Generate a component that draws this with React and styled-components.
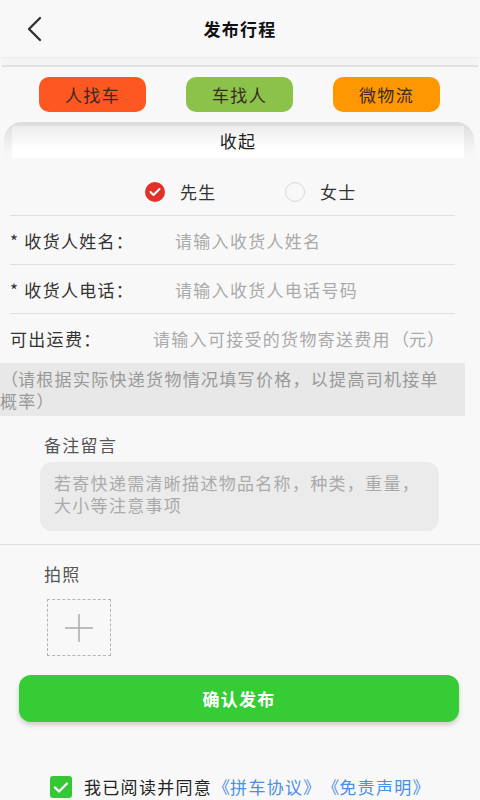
import styled, { createGlobalStyle } from 'styled-components';

const GlobalStyle = createGlobalStyle`
  html, body {
    margin: 0;
    padding: 0;
    background: #f8f8f8;
    font-family: "Noto Sans CJK SC", "Noto Sans", sans-serif;
  }
  * { box-sizing: border-box; }
`

const Page = styled.div`
  width: 480px;
  height: 800px;
  overflow: hidden;
  background: #f8f8f8;
  color: #333;
  font-size: 17px;
  letter-spacing: 1.3px;
`

const Header = styled.header`
  height: 58px;
  display: flex;
  align-items: center;
  justify-content: center;
  position: relative;
  border-bottom: 1px solid #ececec;
`

const BackButton = styled.button`
  position: absolute;
  left: 20px;
  top: 14px;
  border: 0;
  background: none;
  padding: 0;
  width: 28px;
  height: 30px;
  display: flex;
  align-items: center;
  justify-content: center;
`

const Title = styled.h1`
  margin: 0;
  font-size: 17px;
  font-weight: 700;
  color: #111;
`

const Strip = styled.div`
  height: 9px;
  margin: 0 2px;
  background: #f4f4f4;
  border-bottom: 2px solid #e2e2e2;
`

const TypeRow = styled.div`
  display: flex;
  justify-content: space-between;
  padding: 10px 40px 0 39px;
`

const TypeButton = styled.button`
  width: 107px;
  height: 35px;
  border: 0;
  border-radius: 10px;
  background: ${p => p.$bg};
  color: #3a2a20;
  font-family: inherit;
  font-size: 17px;
  letter-spacing: 1.3px;
  padding: 0;
`

const Collapse = styled.div`
  margin: 10px 6px 0 4px;
  height: 36px;
  border-radius: 18px 18px 0 0;
  background: linear-gradient(#dcdcdc, #f6f6f6 80%);
  padding: 0 10px 0 8px;
  display: flex;
`

const CollapseInner = styled.div`
  flex: 1;
  margin-top: 4px;
  padding-bottom: 3px;
  background: linear-gradient(#ececec, #fff 70%);
  display: flex;
  align-items: center;
  justify-content: center;
  color: #222;
`

const Form = styled.div`
  padding: 0 25px 0 10px;
`

const GenderRow = styled.div`
  height: 58px;
  padding-top: 10px;
  display: flex;
  align-items: center;
  padding-left: 135px;
  border-bottom: 1px solid #e0e0e0;
`

const Option = styled.label`
  display: flex;
  align-items: center;
  gap: 15px;
  color: #333;
  width: 140px;
`

const Radio = styled.span`
  width: 20px;
  height: 20px;
  border-radius: 50%;
  display: flex;
  align-items: center;
  justify-content: center;
  background: ${p => (p.$on ? '#e03228' : 'transparent')};
  border: ${p => (p.$on ? '0' : '1px solid #d8d8d8')};
`

const FieldRow = styled.div`
  height: 49px;
  display: flex;
  align-items: center;
  border-bottom: ${p => (p.$last ? '0' : '1px solid #e0e0e0')};
`

const Label = styled.span`
  width: ${p => p.$w}px;
  color: #333;
  flex-shrink: 0;
  white-space: nowrap;
`

const Placeholder = styled.span`
  color: #aaa;
  white-space: nowrap;
`

/* full-width cell for a bracket, glyph pushed to the inner side */
const Bracket = styled.span`
  display: inline-block;
  width: 18px;
  letter-spacing: 0;
  white-space: nowrap;
  text-align: ${p => (p.$open ? 'right' : 'left')};
`

const Note = styled.div`
  margin: 0 15px 0 0;
  padding: 5px 10px 5px 0;
  height: 53px;
  background: #e8e8e8;
  color: #999;
  line-height: 22px;
`

const Section = styled.div`
  padding: 16px 41px ${p => p.$bottom}px 40px;
`

const SectionTitle = styled.div`
  color: #555;
  padding-left: 4px;
  margin-bottom: 5px;
`

const Remark = styled.div`
  height: 69px;
  border-radius: 12px;
  background: #ebebeb;
  color: #aaa;
  line-height: 22px;
  padding: 10px 12px 10px 14px;
`

const Divider = styled.div`
  height: 1px;
  background: #dedede;
`

const PhotoBox = styled.div`
  width: 64px;
  height: 57px;
  margin-left: 7px;
  margin-top: 13px;
  border: 1px dashed #b5b5b5;
  display: flex;
  align-items: center;
  justify-content: center;
`

const Submit = styled.button`
  display: block;
  width: 440px;
  height: 47px;
  margin-left: 19px;
  border: 0;
  border-radius: 12px;
  background: #35cc35;
  color: #fff;
  font-family: inherit;
  font-size: 17px;
  letter-spacing: 1.3px;
  font-weight: 700;
  box-shadow: 0 3px 5px rgba(0, 0, 0, 0.18);
`

const Agree = styled.div`
  margin-top: 54px;
  padding-left: 50px;
  display: flex;
  align-items: center;
  gap: 12px;
  color: #222;
  white-space: nowrap;
  line-height: 22px;
`

const CheckBox = styled.span`
  width: 22px;
  height: 22px;
  flex-shrink: 0;
  border-radius: 3px;
  background: #35c735;
  display: flex;
  align-items: center;
  justify-content: center;
`

const Link = styled.span`
  color: #4a8fe0;
`

const types = [
  { text: '人找车', bg: '#ff5722' },
  { text: '车找人', bg: '#8bc34a' },
  { text: '微物流', bg: '#ff9800' },
]

export default function App() {
  return (
    <Page lang="zh-CN">
      <GlobalStyle />
      <Header>
        <BackButton>
          <svg width="16" height="26" viewBox="0 0 16 26">
            <path d="M14 2 L3 13 L14 24" fill="none" stroke="#333" strokeWidth="2.4" strokeLinecap="round" strokeLinejoin="round" />
          </svg>
        </BackButton>
        <Title>发布行程</Title>
      </Header>
      <Strip />
      <TypeRow>
        {types.map(t => (
          <TypeButton key={t.text} $bg={t.bg}>{t.text}</TypeButton>
        ))}
      </TypeRow>
      <Collapse>
        <CollapseInner>收起</CollapseInner>
      </Collapse>
      <Form>
        <GenderRow>
          <Option>
            <Radio $on>
              <svg width="12" height="10" viewBox="0 0 12 10">
                <path d="M1.5 5 L4.5 8 L10.5 2" fill="none" stroke="#fff" strokeWidth="2" strokeLinecap="round" strokeLinejoin="round" />
              </svg>
            </Radio>
            先生
          </Option>
          <Option>
            <Radio />
            女士
          </Option>
        </GenderRow>
        <FieldRow>
          <Label $w={165}>* 收货人姓名：</Label>
          <Placeholder>请输入收货人姓名</Placeholder>
        </FieldRow>
        <FieldRow>
          <Label $w={165}>* 收货人电话：</Label>
          <Placeholder>请输入收货人电话号码</Placeholder>
        </FieldRow>
        <FieldRow $last>
          <Label $w={143}>可出运费：</Label>
          <Placeholder>
            请输入可接受的货物寄送费用<Bracket $open>（</Bracket>元<Bracket>）</Bracket>
          </Placeholder>
        </FieldRow>
      </Form>
      <Note>
        <Bracket $open>（</Bracket>请根据实际快递货物情况填写价格，以提高司机接单概率<Bracket>）</Bracket>
      </Note>
      <Section $bottom={13}>
        <SectionTitle>备注留言</SectionTitle>
        <Remark>若寄快递需清晰描述物品名称，种类，重量，大小等注意事项</Remark>
      </Section>
      <Divider />
      <Section $bottom={19}>
        <SectionTitle>拍照</SectionTitle>
        <PhotoBox>
          <svg width="30" height="30" viewBox="0 0 30 30">
            <path d="M15 1 V29 M1 15 H29" stroke="#aaa" strokeWidth="1.5" />
          </svg>
        </PhotoBox>
      </Section>
      <Submit>确认发布</Submit>
      <Agree>
        <CheckBox>
          <svg width="16" height="13" viewBox="0 0 16 13">
            <path d="M2 6.5 L6 10.5 L14 2.5" fill="none" stroke="#fff" strokeWidth="2.4" strokeLinecap="round" strokeLinejoin="round" />
          </svg>
        </CheckBox>
        <span>
          我已阅读并同意
          <Link>
            <Bracket $open>《</Bracket>拼车协议<Bracket>》</Bracket>
            <Bracket $open>《</Bracket>免责声明<Bracket>》</Bracket>
          </Link>
        </span>
      </Agree>
    </Page>
  );
}
